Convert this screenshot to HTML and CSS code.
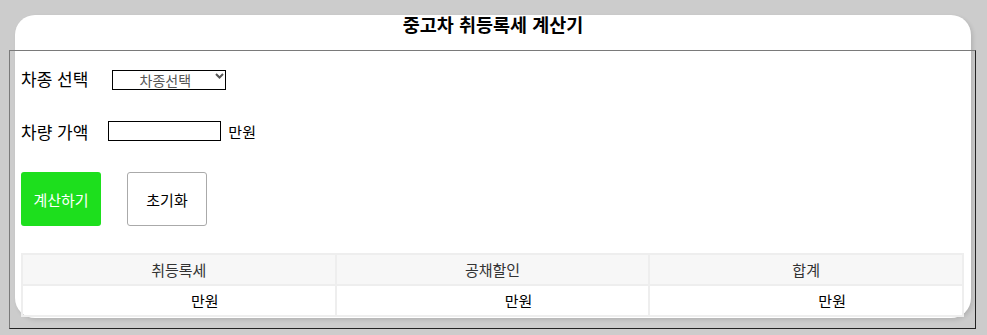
FILE: index.html
```html
<!DOCTYPE html>
<html lang="ko">
<head>
    <meta charset="UTF-8">
    <meta name="viewport" content="width=device-width, initial-scale=1.0">
    <title>중고차 취등록세 계산기</title>
    <link rel="stylesheet" href="styles.css">
</head>
<body>
    <div class="calc">
        <h1>중고차 취등록세 계산기</h1>
        <div class="calc-box">
            <div class="row row-car">
                <label for="carType">차종 선택</label>
                <span class="select-wrap">
                    <select id="carType">
                        <option>차종선택</option>
                        <option>승용차</option>
                        <option>경차</option>
                        <option>승합차</option>
                        <option>화물차</option>
                    </select>
                    <svg class="chevron" width="9" height="6" viewBox="0 0 9 6"><polyline points="1,1 4.5,4.5 8,1" fill="none" stroke="#555" stroke-width="2"/></svg>
                </span>
            </div>
            <div class="row row-price">
                <label for="carPrice">차량 가액</label>
                <input type="text" id="carPrice">
                <span class="unit">만원</span>
            </div>
            <div class="buttons">
                <button class="btn-calc" id="calcBtn">계산하기</button>
                <button class="btn-reset" id="resetBtn">초기화</button>
            </div>
            <table class="result">
                <thead>
                    <tr>
                        <th>취등록세</th>
                        <th>공채할인</th>
                        <th>합계</th>
                    </tr>
                </thead>
                <tbody>
                    <tr>
                        <td><span class="value" id="taxVal"></span>만원</td>
                        <td><span class="value" id="bondVal"></span>만원</td>
                        <td><span class="value" id="totalVal"></span>만원</td>
                    </tr>
                </tbody>
            </table>
        </div>
    </div>

    <script>
        const rates = { "승용차": 0.07, "경차": 0.04, "승합차": 0.05, "화물차": 0.05 };

        document.getElementById("calcBtn").onclick = function() {
            const type = document.getElementById("carType").value;
            const price = parseFloat(document.getElementById("carPrice").value);
            if (!rates[type] || !price) {
                alert("차종과 차량 가액을 입력하세요!");
                return;
            }
            const tax = Math.round(price * rates[type]);
            const bond = Math.round(price * 0.01);
            document.getElementById("taxVal").textContent = tax;
            document.getElementById("bondVal").textContent = bond;
            document.getElementById("totalVal").textContent = tax + bond;
        };

        document.getElementById("resetBtn").onclick = function() {
            document.getElementById("carType").selectedIndex = 0;
            document.getElementById("carPrice").value = "";
            document.querySelectorAll(".value").forEach(function(el) {
                el.textContent = "";
            });
        };
    </script>
</body>
</html>
```

FILE: styles.css
```css
body {
    font-family: "Noto Sans CJK KR", "Noto Sans", sans-serif;
    background-color: #cccccc;
    margin: 0;
    padding: 15px;
    color: #000;
}
.calc {
    width: 956px;
    height: 303px;
    background-color: #fff;
    border-radius: 20px;
    box-shadow: 2px 2px 4px rgba(0, 0, 0, 0.12);
}
h1 {
    margin: 0;
    height: 35px;
    font-size: 18.5px;
    line-height: 19px;
    font-weight: bold;
    text-align: center;
}
.calc-box {
    box-sizing: border-box;
    height: 279px;
    margin: 0 -5px 0 -6px;
    padding: 17px 11px 0 11px;
    border: 1px solid;
    border-color: #7a7a7a #222 #222 #7a7a7a;
}
.row {
    display: flex;
    align-items: center;
    height: 20px;
    font-size: 17px;
}
.row-price {
    margin-top: 33px;
}
.row-car label {
    margin-right: 24px;
}
.row-price label {
    margin-right: 20px;
}
.select-wrap {
    position: relative;
    display: inline-block;
}
select {
    appearance: none;
    -webkit-appearance: none;
    box-sizing: border-box;
    width: 114px;
    height: 20px;
    padding: 0 8px 0 0;
    border: 1px solid #000;
    border-radius: 0;
    background: #fff;
    font-family: inherit;
    font-size: 14px;
    line-height: 18px;
    color: #555;
    text-align: center;
    text-align-last: center;
}
.chevron {
    position: absolute;
    right: 2px;
    top: 7px;
    pointer-events: none;
}
input[type="text"] {
    box-sizing: border-box;
    width: 113px;
    height: 20px;
    margin: 0;
    padding: 0 3px;
    border: 1px solid #000;
    font-family: inherit;
}
.unit {
    margin-left: 7px;
    font-size: 15px;
}
.buttons {
    display: flex;
    gap: 26px;
    margin-top: 31px;
}
.buttons button {
    width: 80px;
    height: 54px;
    border-radius: 3px;
    font-family: inherit;
    font-size: 15px;
    cursor: pointer;
}
.btn-calc {
    background-color: #1ddf1d;
    border: none;
    color: #fff;
}
.btn-reset {
    background-color: #fff;
    border: 1px solid #aaa;
    color: #000;
}
table {
    width: 100%;
    margin-top: 27px;
    border-collapse: collapse;
    table-layout: fixed;
}
th, td {
    height: 29px;
    padding: 0;
    border: 2px solid #eeeeee;
    text-align: center;
    font-size: 15px;
}
th {
    background-color: #f7f7f7;
    font-weight: normal;
    color: #333;
}
.value {
    display: inline-block;
    width: 52px;
}
```
